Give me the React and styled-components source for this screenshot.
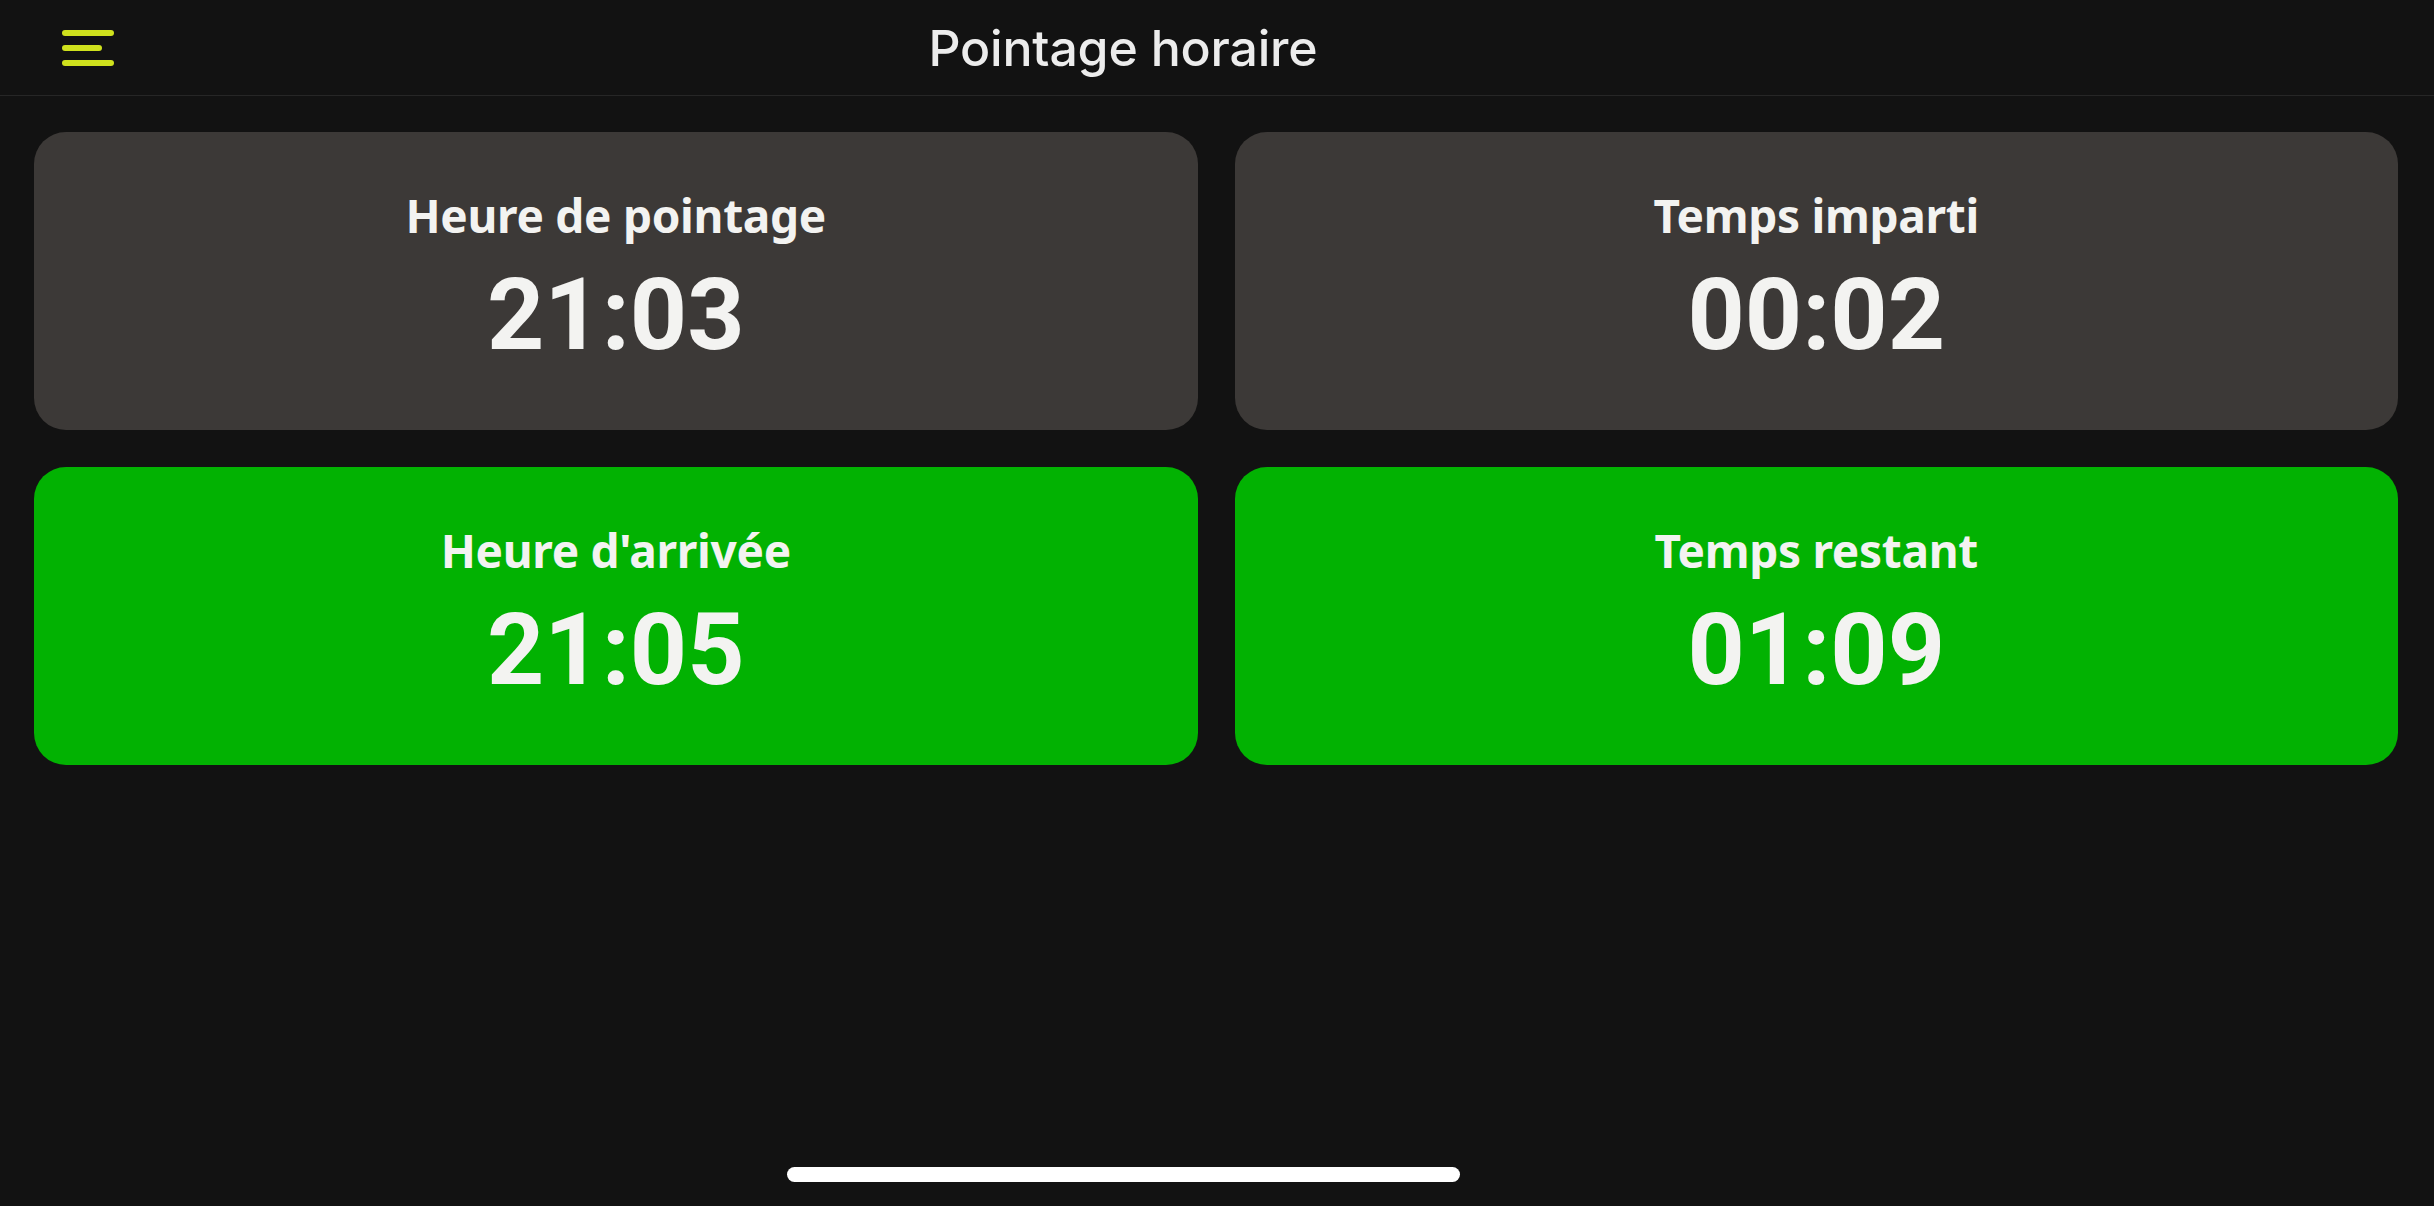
import React from "react";
import styled, { createGlobalStyle } from "styled-components";

const GlobalStyle = createGlobalStyle`
  html, body {
    margin: 0;
    padding: 0;
    background: #121212;
  }
  * { box-sizing: border-box; }
`;

const Screen = styled.div`
  min-height: 100vh;
  display: flex;
  flex-direction: column;
  background: #121212;
  color: #f1f1ef;
`;

const TopBar = styled.header`
  height: 96px;
  display: grid;
  grid-template-columns: 1fr auto 1fr;
  align-items: center;
  padding-right: 188px;
  border-bottom: 1.5px solid #262626;
`;

const MenuButton = styled.button`
  justify-self: start;
  margin-left: 62px;
  width: 52px;
  height: 36px;
  padding: 0;
  border: none;
  background: transparent;
  display: flex;
  flex-direction: column;
  justify-content: space-between;
  align-items: flex-start;
  cursor: pointer;
`;

const MenuLine = styled.span`
  display: block;
  height: 6px;
  width: ${(p) => p.$w}px;
  border-radius: 3px;
  background: #cfe11d;
`;

const Title = styled.h1`
  margin: 0;
  font-family: Inter, "Noto Sans", sans-serif;
  font-weight: 500;
  font-size: 50px;
  letter-spacing: -0.2px;
  color: #ececec;
`;

const Board = styled.main`
  flex: 1;
  display: grid;
  grid-template-columns: 1fr 1fr;
  grid-auto-rows: 298px;
  gap: 37px;
  padding: 36px 36px 0 34px;
  align-content: start;
`;

const Tile = styled.section`
  border-radius: 32px;
  background: ${(p) => (p.$tone === "green" ? "#02b202" : "#3c3937")};
  display: flex;
  flex-direction: column;
  align-items: center;
  justify-content: center;
  padding-bottom: 8px;
`;

const Label = styled.div`
  font-family: "Noto Sans", Inter, sans-serif;
  font-weight: 700;
  font-size: 46px;
  line-height: 1.15;
  letter-spacing: -0.3px;
  color: #f3f3f1;
`;

const Clock = styled.div`
  font-family: Roboto, "Noto Sans", sans-serif;
  font-weight: 700;
  font-size: 100px;
  line-height: 1;
  margin-top: 24px;
  color: #f3f3f1;
`;

const Footer = styled.footer`
  display: flex;
  justify-content: center;
  padding: 0 188px 24px 0;
`;

const HomeBar = styled.div`
  width: 673px;
  height: 15px;
  border-radius: 8px;
  background: #ffffff;
`;

const tiles = [
  { label: "Heure de pointage", value: "21:03", tone: "gray" },
  { label: "Temps imparti", value: "00:02", tone: "gray" },
  { label: "Heure d'arrivée", value: "21:05", tone: "green" },
  { label: "Temps restant", value: "01:09", tone: "green" },
];

export default function App() {
  return (
    <>
      <GlobalStyle />
      <Screen>
        <TopBar>
          <MenuButton aria-label="Menu">
            <MenuLine $w={52} />
            <MenuLine $w={40} />
            <MenuLine $w={52} />
          </MenuButton>
          <Title>Pointage horaire</Title>
          <span />
        </TopBar>
        <Board>
          {tiles.map((t) => (
            <Tile key={t.label} $tone={t.tone}>
              <Label>{t.label}</Label>
              <Clock>{t.value}</Clock>
            </Tile>
          ))}
        </Board>
        <Footer>
          <HomeBar />
        </Footer>
      </Screen>
    </>
  );
}
